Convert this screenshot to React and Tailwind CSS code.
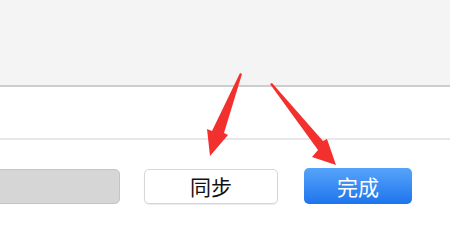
export default function App() {
  return (
    <div className="relative h-[221px] w-[450px] overflow-hidden bg-white" style={{ fontFamily: '"Noto Sans CJK SC", "Liberation Sans", sans-serif' }}>
      <div className="h-[87px] border-b-2 border-[#cdcdcd] bg-[#f4f4f4]" />
      <div className="h-[53px] border-b-2 border-[#e8e8e8] bg-white" />
      <div className="flex items-center pt-[28px]">
        <div className="ml-[-10px] h-[35px] w-[130px] rounded-[5px] border border-[#c4c4c4] bg-[#d6d6d6]" />
        <button className="ml-[24px] flex h-[35px] w-[134px] items-center justify-center rounded-[5px] border border-[#d6d6d6] bg-white text-[21px] leading-none text-[#111] shadow-[0_1px_1px_rgba(0,0,0,0.08)]">
          同步
        </button>
        <button className="ml-[26px] flex h-[36px] w-[108px] items-center justify-center rounded-[5px] bg-gradient-to-b from-[#55a4fa] to-[#1d74ec] text-[21px] leading-none text-white">
          完成
        </button>
      </div>
      <svg className="pointer-events-none absolute left-0 top-0" width="450" height="221" viewBox="0 0 450 221">
        <polygon points="240,73 242,74 224,133 228,135 210,156 207,129 212,131" fill="#f2312f" />
        <polygon points="270,84 272,83 323,141 327,139 336,165 312,157 318,150" fill="#f2312f" />
      </svg>
    </div>
  );
}
